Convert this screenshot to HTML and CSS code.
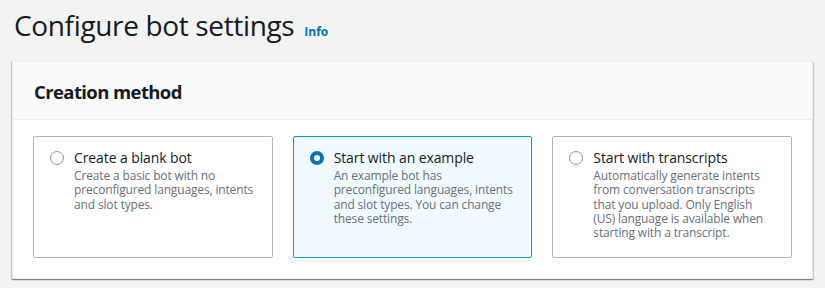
FILE: index.html
```html
<html>
<head>
	<meta http-equiv="content-type" content="text/html;charset=utf-8">
	<title>Configure bot settings</title>
	<link rel="stylesheet" href="styles.css">
</head>
<body>
	<div class="page-head">
		<h1>Configure bot settings</h1>
		<a class="info" href="#">Info</a>
	</div>

	<div class="panel">
		<div class="panel-head">
			<h2>Creation method</h2>
		</div>
		<div class="panel-body">
			<label class="tile">
				<span class="radio"></span>
				<span class="tile-text">
					<span class="tile-title">Create a blank bot</span>
					<span class="tile-desc">Create a basic bot with no preconfigured languages, intents and slot types.</span>
				</span>
			</label>
			<label class="tile checked">
				<span class="radio"></span>
				<span class="tile-text">
					<span class="tile-title">Start with an example</span>
					<span class="tile-desc">An example bot has preconfigured languages, intents and slot types. You can change these settings.</span>
				</span>
			</label>
			<label class="tile">
				<span class="radio"></span>
				<span class="tile-text">
					<span class="tile-title">Start with transcripts</span>
					<span class="tile-desc">Automatically generate intents from conversation transcripts that you upload. Only English (US) language is available when starting with a transcript.</span>
				</span>
			</label>
		</div>
	</div>
</body>
</html>
```

FILE: styles.css
```css
body{
	background:#f2f3f3;
	margin:0;
	padding:0 12px;
	font-family:"Open Sans","Noto Sans",Arial,sans-serif;
	color:#16191f;
}

.page-head{
	display:flex;
	align-items:baseline;
	padding:5px 2px 0;
	height:61px;
	box-sizing:border-box;
}
.page-head h1{
	margin:0;
	font-size:28px;
	font-weight:400;
	line-height:40px;
	letter-spacing:-0.35px;
}
.info{
	margin-left:10px;
	font-size:12px;
	font-weight:700;
	color:#0073bb;
	text-decoration:none;
}

.panel{
	background:#fff;
	border:1px solid #eaeded;
	box-shadow:0 1px 1px rgba(0,28,36,0.3), 1px 1px 1px rgba(0,28,36,0.15), -1px 1px 1px rgba(0,28,36,0.15);
}
.panel-head{
	background:#fafafa;
	border-bottom:1px solid #eaeded;
	padding:17px 20px 0 21px;
	height:58px;
	box-sizing:border-box;
}
.panel-head h2{
	margin:0;
	font-size:18.5px;
	font-weight:700;
	line-height:26px;
	letter-spacing:-0.6px;
}
.panel-body{
	display:grid;
	grid-template-columns:repeat(3,1fr);
	gap:20px;
	padding:16px 20px 20px;
}

.tile{
	display:flex;
	gap:10px;
	height:122px;
	box-sizing:border-box;
	padding:10px 16px 10px 16px;
	border:1px solid #aab7b8;
	border-radius:2px;
	cursor:pointer;
}
.tile.checked{
	background:#f1faff;
	border-color:#00a1c9;
}
.radio{
	flex:none;
	width:14px;
	height:14px;
	margin-top:4px;
	border:1px solid #879596;
	border-radius:50%;
	box-sizing:border-box;
	background:#fff;
}
.tile.checked .radio{
	border:4px solid #0073bb;
}
.tile-text{
	display:flex;
	flex-direction:column;
}
.tile-title{
	font-size:14px;
	line-height:22px;
	letter-spacing:-0.1px;
}
.tile-desc{
	font-size:12px;
	line-height:14.25px;
	letter-spacing:-0.15px;
	color:#687078;
}
```
